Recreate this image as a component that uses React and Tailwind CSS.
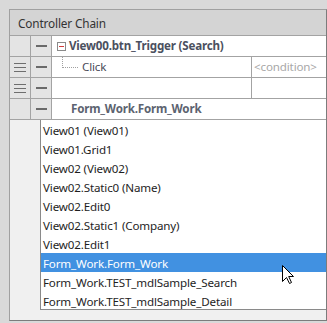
import React from "react";

const FONT = { fontFamily: '"Noto Sans", "Open Sans", sans-serif' };

function Hamburger() {
  return (
    <div className="flex flex-col gap-[3px] w-[12px]">
      <div className="h-px bg-[#6e6e6e]" />
      <div className="h-px bg-[#6e6e6e]" />
      <div className="h-px bg-[#6e6e6e]" />
    </div>
  );
}

function Dash() {
  return <div className="w-[11px] h-[2px] bg-[#6a6a6a]" />;
}

function Row({ ham, children, cond }) {
  return (
    <div className="flex h-[21px] border-b border-[#a3a3a3]">
      <div className="w-[21px] shrink-0 bg-[#e4e4e4] border-r border-[#a3a3a3] flex items-center justify-center">
        {ham && <Hamburger />}
      </div>
      <div className="w-[21px] shrink-0 bg-[#e4e4e4] border-r border-[#a3a3a3] flex items-center justify-center">
        <Dash />
      </div>
      <div className="flex-1 bg-white flex items-center min-w-0 relative">{children}</div>
      {cond !== undefined && (
        <div className="w-[75px] shrink-0 bg-white border-l border-[#a3a3a3] flex items-center pl-[2px] text-[11.6px] tracking-[-0.15px] text-[#a8a8a8]">
          {cond}
        </div>
      )}
    </div>
  );
}

const items = [
  "View01 (View01)",
  "View01.Grid1",
  "View02 (View02)",
  "View02.Static0 (Name)",
  "View02.Edit0",
  "View02.Static1 (Company)",
  "View02.Edit1",
  "Form_Work.Form_Work",
  "Form_Work.TEST_mdlSample_Search",
  "Form_Work.TEST_mdlSample_Detail",
];

export default function App() {
  return (
    <div
      className="w-[327px] h-[323px] bg-[#d9d9d9] pl-[9px] pt-[9px] relative overflow-hidden"
      style={FONT}
    >
      <div className="w-[318px] h-[312px] border-l border-t border-[#a0a0a0] border-r border-b border-r-[#7c7c7c] border-b-[#7c7c7c] bg-[#f0f0f0] flex flex-col">
        {/* header */}
        <div className="h-[26px] shrink-0 bg-[#d4d4d4] border-b border-[#a3a3a3] flex items-center pl-[8px] pt-[2px] text-[11.8px] tracking-[-0.15px] text-[#333]">
          Controller Chain
        </div>
        <Row>
          <div className="ml-[5px] w-[9px] h-[9px] border border-[#8a8a8a] bg-white flex items-center justify-center">
            <div className="w-[5px] h-px bg-[#d23c3c]" />
          </div>
          <span className="ml-[3px] text-[11.6px] tracking-[-0.2px] font-bold text-[#4b5060] whitespace-nowrap">
            View00.btn_Trigger (Search)
          </span>
        </Row>
        <Row ham cond="<condition>">
          <div className="absolute left-[10px] top-0 h-[11px] border-l border-dotted border-[#a0a0a0]" />
          <div className="absolute left-[10px] top-[10px] w-[16px] border-t border-dotted border-[#a0a0a0]" />
          <span className="ml-[30px] text-[11.6px] tracking-[-0.15px] text-[#4a4a58]">Click</span>
        </Row>
        <Row ham cond="" />
        <Row>
          <span className="ml-[19px] text-[11.6px] tracking-[-0.2px] font-bold text-[#5c6370] whitespace-nowrap">
            Form_Work.Form_Work
          </span>
        </Row>
        <div className="flex flex-1 min-h-0">
          <div className="w-[30px] shrink-0" />
          <div className="flex-1 flex flex-col">
            <div className="border-l border-b border-[#8a8a8a] bg-white flex flex-col">
              {items.map((t, i) => (
                <div
                  key={t}
                  className={
                    (i === 9 ? "h-[18px] " : "h-[19px] ") +
                    "flex items-center pl-[2px] pt-[3px] text-[11.6px] tracking-[-0.15px] whitespace-nowrap " +
                    (i === 7 ? "bg-[#4191e1] text-white" : "text-[#1e1e1e]")
                  }
                >
                  {t}
                </div>
              ))}
            </div>
          </div>
        </div>
      </div>
      {/* mouse cursor */}
      <svg
        className="absolute left-[282px] top-[265px]"
        width="13"
        height="20"
        viewBox="0 0 13 20"
      >
        <path
          d="M0.5 0.5 L0.5 16.5 L4.5 12.5 L7.5 18.5 L9.5 17.5 L6.7 11.5 L11.5 11.5 Z"
          fill="white"
          stroke="black"
          strokeWidth="1"
          strokeLinejoin="miter"
        />
      </svg>
    </div>
  );
}
